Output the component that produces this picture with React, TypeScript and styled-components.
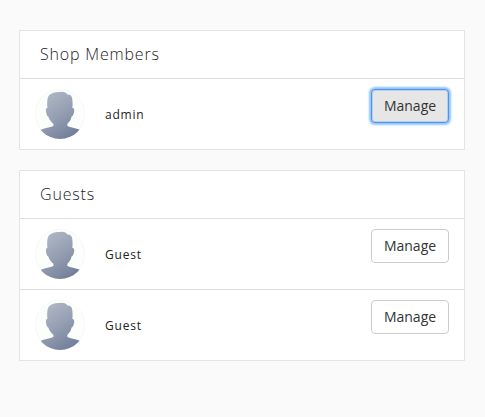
import React from "react";
import styled, { createGlobalStyle, css } from "styled-components";

const GlobalStyle = createGlobalStyle`
  * { box-sizing: border-box; }
  body {
    margin: 0;
    background: #fafafa;
    color: #222;
    font-family: "Open Sans", "Noto Sans", sans-serif;
  }
`;

const Page = styled.main`
  display: flex;
  flex-direction: column;
  gap: 20px;
  padding: 30px 20px 0 19px;
`;

const Panel = styled.section`
  background: #fff;
  border: 1px solid #e4e4e4;
`;

const PanelTitle = styled.h2`
  height: 47px;
  margin: 0;
  padding-left: 20px;
  font-size: 16px;
  font-weight: 300;
  line-height: 46px;
  letter-spacing: 0.82px;
`;

const MemberRow = styled.div`
  display: flex;
  align-items: flex-start;
  height: 71px;
  padding: 10px 15px;
  border-top: 1px solid #ddd;
`;

const Picture = styled.svg`
  flex: none;
  width: 50px;
  height: 50px;
`;

const Name = styled.span`
  flex: 1;
  margin-left: 20px;
  font-size: 12px;
  line-height: 52px;
  letter-spacing: 0.8px;
`;

const ManageButton = styled.button<{ $focused?: boolean }>`
  width: 78px;
  height: 34px;
  padding: 0;
  border: 1px solid #ccc;
  border-radius: 4px;
  background: #fff;
  color: #333;
  font: 400 14px/20px "Open Sans", "Noto Sans", sans-serif;
  ${({ $focused }) =>
    $focused &&
    css`
      background: #e6e6e6;
      border-color: #5395df;
      box-shadow: 0 0 2px 2px #8fc5ff, inset 0 0 0 1px #b9d0ea;
    `}
`;

function Avatar({ id }: { id: string }) {
  return (
    <Picture viewBox="0 0 50 50" aria-hidden="true">
      <defs>
        <linearGradient id={`${id}-tone`} x1="0.15" y1="0" x2="0.75" y2="1">
          <stop offset="0" stopColor="#b3bac8" />
          <stop offset="0.5" stopColor="#959fb2" />
          <stop offset="1" stopColor="#707d99" />
        </linearGradient>
        <clipPath id={`${id}-clip`}>
          <circle cx="25" cy="25" r="25" />
        </clipPath>
      </defs>
      <circle cx="25" cy="25" r="24.7" fill="#fcfefc" stroke="#f0f3f1" strokeWidth="0.6" />
      <path
        clipPath={`url(#${id}-clip)`}
        fill={`url(#${id}-tone)`}
        d="M12.4 18.8C12 14 12 10 13.4 7.2C15 4.2 20 2.8 25 2.9C29 2.5 31 3.2 32.4 5.5C35.5 5.4 37.2 7.4 37.3 10.2C37.7 13 37.7 16 37.4 19C39.3 19 39.6 21 39 23.3C38.4 26 37.8 27.2 36.6 27.6C36 31 34.4 33 32.4 34.8L32.4 37C35.5 38.4 40 39 46 41L46 50H4L4.5 41.3C10 39 15 38.4 18.4 37L18.4 34.8C16 32.6 14.2 30.8 13.4 27.8C12.2 27.2 11.5 25.6 11.1 23.3C10.6 21 11 19 12.4 18.8Z"
      />
    </Picture>
  );
}

interface Member {
  id: string;
  name: string;
  focused?: boolean;
}

const groups: { title: string; members: Member[] }[] = [
  { title: "Shop Members", members: [{ id: "admin", name: "admin", focused: true }] },
  {
    title: "Guests",
    members: [
      { id: "guest-1", name: "Guest" },
      { id: "guest-2", name: "Guest" },
    ],
  },
];

export default function App() {
  return (
    <>
      <GlobalStyle />
      <Page>
        {groups.map((group) => (
          <Panel key={group.title}>
            <PanelTitle>{group.title}</PanelTitle>
            {group.members.map((member) => (
              <MemberRow key={member.id}>
                <Avatar id={member.id} />
                <Name>{member.name}</Name>
                <ManageButton $focused={member.focused}>Manage</ManageButton>
              </MemberRow>
            ))}
          </Panel>
        ))}
      </Page>
    </>
  );
}
